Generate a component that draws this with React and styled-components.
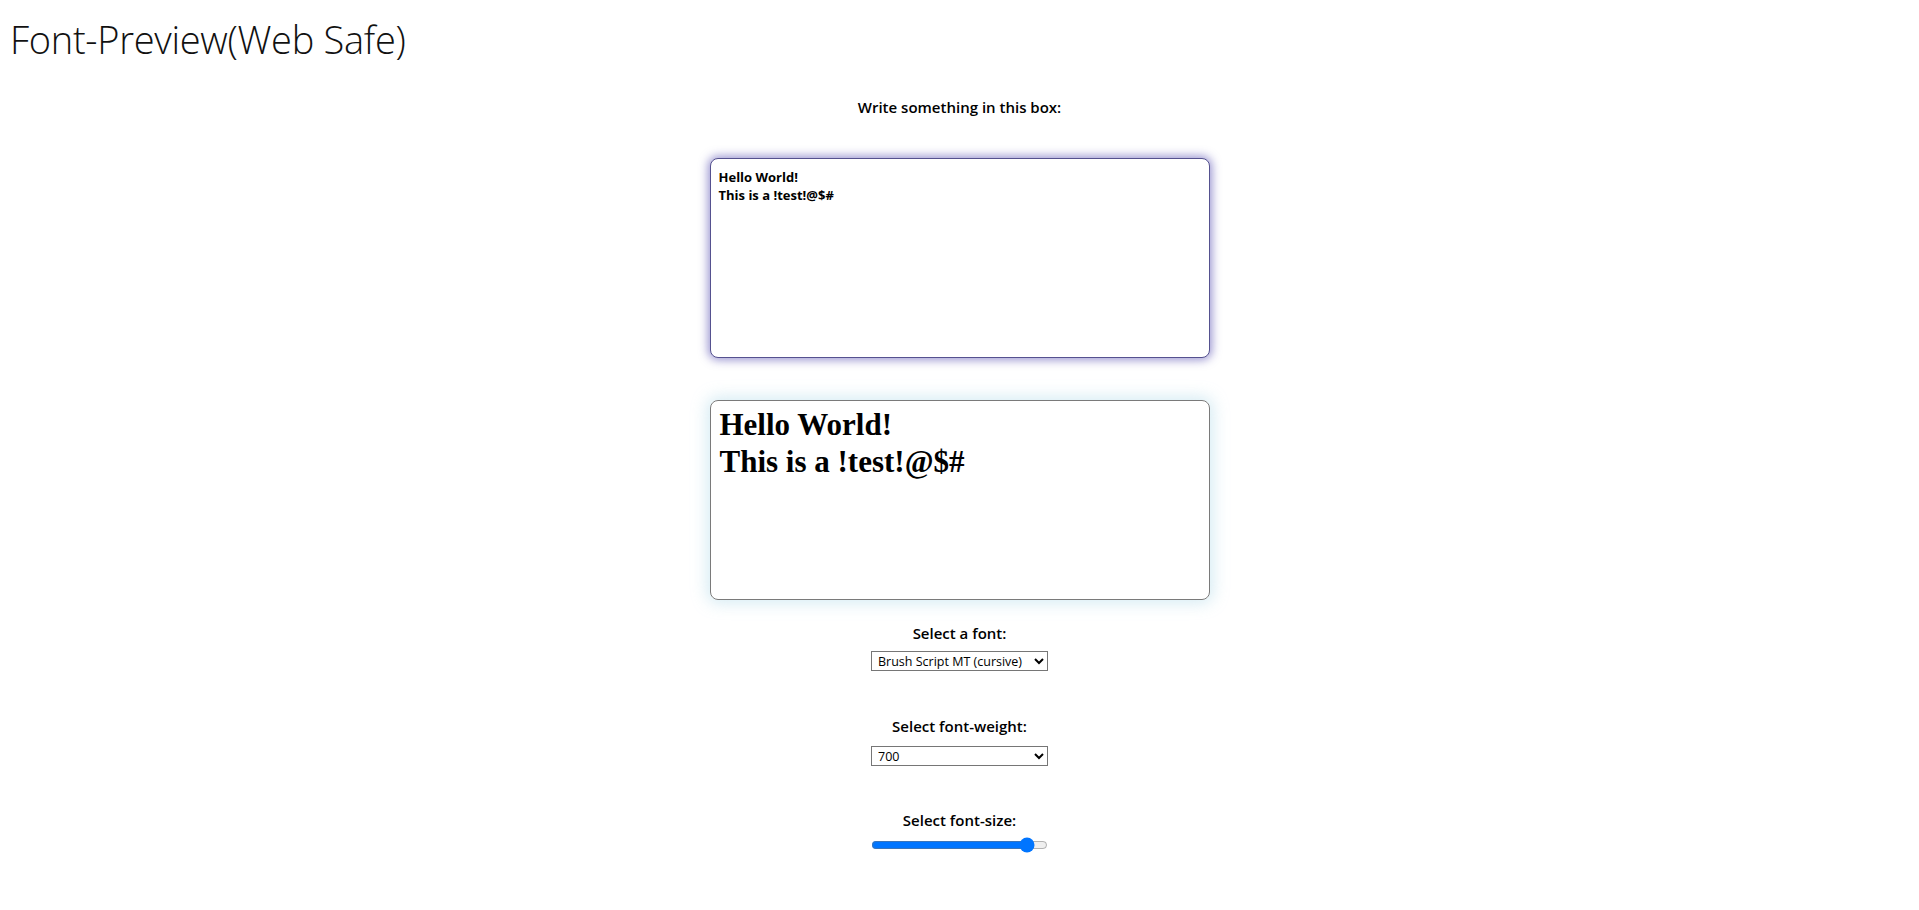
import React, { useState } from 'react'
import styled, { createGlobalStyle } from 'styled-components'

const GlobalStyle = createGlobalStyle`
  body {
    margin: 8px;
    background: #fff;
    color: #000;
    font-family: "Open Sans", "Noto Sans", sans-serif;
  }
`

const Title = styled.h1`
  margin: 6px 0 0 2px;
  font-size: 38px;
  font-weight: 300;
  line-height: 50px;
  letter-spacing: -0.3px;
  color: #111;
`

const Column = styled.main`
  display: flex;
  flex-direction: column;
  align-items: center;
`

const Label = styled.label`
  display: block;
  font-size: 15px;
  font-weight: 600;
  line-height: 20px;
  margin: ${props => props.top || 0}px 0 ${props => props.bottom || 0}px;
`

const Input = styled.textarea`
  box-sizing: border-box;
  width: 500px;
  height: 200px;
  margin-top: 41px;
  padding: 9px 8px;
  border: 1px solid #55518f;
  border-radius: 8px;
  box-shadow: 0 0 10px 2px rgba(70, 60, 170, 0.55);
  resize: none;
  outline: none;
  font-family: "Open Sans", "Noto Sans", sans-serif;
  font-size: 13px;
  font-weight: 700;
  line-height: 18px;
  color: #000;
`

const Preview = styled.div`
  box-sizing: border-box;
  width: 500px;
  height: 200px;
  margin-top: 42px;
  padding: 6px 9px;
  border: 1px solid #7a7a7a;
  border-radius: 8px;
  box-shadow: 0 0 16px 3px rgba(150, 205, 225, 0.4);
  white-space: pre-wrap;
  font-family: "Liberation Serif", "Times New Roman", serif;
  font-size: ${props => props.size}px;
  font-weight: ${props => props.weight};
  line-height: 1.18;
`

const Select = styled.select`
  width: 177px;
  height: 20px;
  font-family: "Open Sans", "Noto Sans", sans-serif;
  font-size: 12.5px;
  border: 1px solid #767676;
  border-radius: 0;
  background: #fff;
  color: #000;
  padding: 0 2px;
`

const Range = styled.input`
  width: 177px;
  margin: 7px 0 0;
  accent-color: #0075ff;
`

const fonts = [
  'Arial (sans-serif)',
  'Verdana (sans-serif)',
  'Tahoma (sans-serif)',
  'Times New Roman (serif)',
  'Georgia (serif)',
  'Courier New (monospace)',
  'Brush Script MT (cursive)',
]

const weights = ['100', '200', '300', '400', '500', '600', '700', '800', '900']

export default function App() {
  const [text, setText] = useState('Hello World!\nThis is a !test!@$#')
  const [font, setFont] = useState('Brush Script MT (cursive)')
  const [weight, setWeight] = useState('700')
  const [size, setSize] = useState(31)

  return (
    <>
      <GlobalStyle />
      <Title>Font-Preview(Web Safe)</Title>
      <Column>
        <Label top={33} htmlFor="box">Write something in this box:</Label>
        <Input id="box" value={text} onChange={e => setText(e.target.value)} />
        <Preview size={size} weight={weight}>{text}</Preview>
        <Label top={23} bottom={8}>Select a font:</Label>
        <Select value={font} onChange={e => setFont(e.target.value)}>
          {fonts.map(f => <option key={f}>{f}</option>)}
        </Select>
        <Label top={45} bottom={10}>Select font-weight:</Label>
        <Select value={weight} onChange={e => setWeight(e.target.value)}>
          {weights.map(w => <option key={w}>{w}</option>)}
        </Select>
        <Label top={44} bottom={0}>Select font-size:</Label>
        <Range type="range" min="8" max="33" value={size} onChange={e => setSize(+e.target.value)} />
      </Column>
    </>
  )
}
